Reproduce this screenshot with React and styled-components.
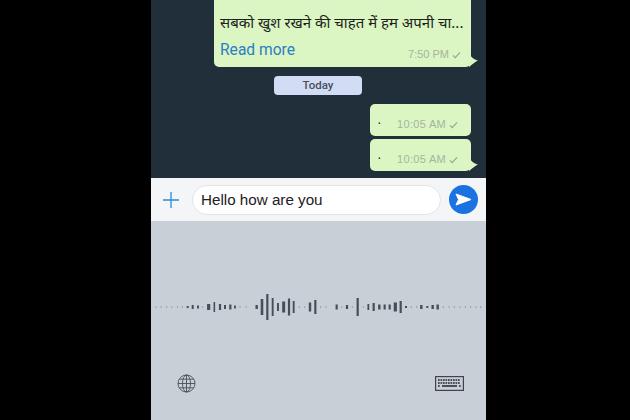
import styled, { createGlobalStyle } from "styled-components";

const GlobalStyle = createGlobalStyle`
  html, body {
    margin: 0;
    height: 420px;
    overflow: hidden;
    background: #000;
    font-family: "Liberation Sans", Arial, sans-serif;
  }
`;

const WAVE = [
  [18, 1, 1], [33, 1, 1], [50, 1, 1], [65, 1, 1], [82, 1, 1], [97, 1, 1],
  [113, 2, 2], [128, 4, 2], [144, 3, 2], [158, 1, 1], [176, 6, 3.2], [193, 10, 1.6],
  [210, 6, 2.2], [225, 4, 2], [241, 5, 2.2], [255, 3, 1.8], [270, 1, 1], [288, 1, 1],
  [320, 4, 2.4], [336, 16, 2.6], [352, 26, 2.2], [368, 18, 1.9], [384, 8, 1.9], [401, 11, 3],
  [417, 17, 2.2], [431, 12, 1.9], [448, 1, 1], [464, 1, 1], [480, 9, 2.4], [496, 14, 2.2],
  [512, 1, 1], [528, 1, 1], [560, 5, 2.2], [575, 1, 1], [591, 4, 2.2], [607, 1, 1],
  [623, 18, 2.2], [640, 1, 1], [655, 6, 1.8], [671, 8, 2.2], [688, 5, 2.4], [704, 5, 2.2],
  [719, 5, 2.2], [736, 9, 3.2], [752, 12, 2.2], [768, 2, 2], [784, 1, 1], [800, 1, 1],
  [814, 4, 2.4], [832, 2, 2], [848, 4, 2.4], [863, 5, 2.4], [880, 1, 1], [897, 1, 1],
  [913, 1, 1], [930, 1, 1], [946, 1, 1], [962, 1, 1], [978, 1, 1], [992, 1, 1],
];

function Tail() {
  return (
    <TailShape viewBox="0 0 10 14">
      <path d="M0 0 C1.500 3 4 6.500 9 7.500 C6.500 8.500 4 11 0 14 Z" fill="#dbf5c3" />
    </TailShape>
  );
}

function Check() {
  return (
    <svg width="9" height="8" viewBox="0 0 10 9">
      <path d="M1 5 L3.500 7.500 L9 1.500" fill="none" stroke="#97a58e" strokeWidth="1.200" />
    </svg>
  );
}

function ShortBubble({ time, tail }) {
  return (
    <Short>
      <Dot>·</Dot>
      <ShortMeta>
        {time} <Check />
      </ShortMeta>
      {tail && <Tail />}
    </Short>
  );
}

function Waveform() {
  return (
    <svg width="335" height="30" viewBox="0 0 335 30">
      {WAVE.map(([x, h, w]) => (
        <rect key={x} x={x / 3 - 1 - w / 2} y={15 - h / 2} width={w} height={h} fill={h > 1 ? "#474e57" : "#6d747c"} />
      ))}
    </svg>
  );
}

function Globe() {
  return (
    <svg width="19" height="19" viewBox="0 0 19 19" fill="none" stroke="#4a4f57" strokeWidth="0.900">
      <circle cx="9.500" cy="9.500" r="8.500" />
      <ellipse cx="9.500" cy="9.500" rx="4" ry="8.500" />
      <path d="M9.500 1 V18 M1 9.500 H18 M2.300 5.200 H16.700 M2.300 13.800 H16.700" />
    </svg>
  );
}

function KeyboardIcon() {
  const rows = [
    [4, 6.500, 9, 11.500, 14, 16.500, 19, 21.500, 24],
    [4, 6.500, 9, 11.500, 14, 16.500, 19, 21.500, 24],
  ];
  return (
    <svg width="29" height="15" viewBox="0 0 29 15">
      <rect x="0.600" y="0.600" width="27.800" height="13.800" fill="none" stroke="#3f444c" strokeWidth="1.200" />
      {rows.map((row, r) =>
        row.map((x) => <rect key={`${r}-${x}`} x={x - 1} y={3 + r * 3} width="1.700" height="2" fill="#4a4f57" />)
      )}
      <rect x="3" y="9" width="1.700" height="2" fill="#4a4f57" />
      <rect x="7" y="9" width="15" height="2" fill="#4a4f57" />
      <rect x="24" y="9" width="1.700" height="2" fill="#4a4f57" />
    </svg>
  );
}

export default function App() {
  return (
    <>
      <GlobalStyle />
      <Phone>
        <Chat>
          <LongBubble>
            <Hindi>सबको खुश रखने की चाहत में हम अपनी चा...</Hindi>
            <Footer>
              <ReadMore>Read more</ReadMore>
              <Meta>
                7:50 PM <Check />
              </Meta>
            </Footer>
            <Tail />
          </LongBubble>
          <DayPill>Today</DayPill>
          <ShortBubble time="10:05 AM" />
          <ShortBubble time="10:05 AM" tail />
        </Chat>
        <InputBar>
          <svg width="18" height="18" viewBox="0 0 18 18">
            <path d="M9 1 V17 M1 9 H17" stroke="#2f88d8" strokeWidth="1.300" />
          </svg>
          <TextBox>Hello how are you</TextBox>
          <SendButton>
            <svg width="17" height="13" viewBox="0 0 17 13">
              <path d="M1 1 L16 6.500 L1 12 L3.500 6.500 Z" fill="#fff" stroke="#fff" strokeLinejoin="round" />
            </svg>
          </SendButton>
        </InputBar>
        <Dictation>
          <Waveform />
          <KeyRow>
            <Globe />
            <KeyboardIcon />
          </KeyRow>
        </Dictation>
      </Phone>
    </>
  );
}

const Phone = styled.div`
  width: 335px;
  height: 420px;
  margin-left: 151px;
  display: flex;
  flex-direction: column;
  overflow: hidden;
`;

const Chat = styled.div`
  height: 178px;
  flex: none;
  box-sizing: border-box;
  padding: 0 15px 7px 0;
  background: #202f3a;
  display: flex;
  flex-direction: column;
  align-items: flex-end;
  justify-content: flex-end;
`;

const LongBubble = styled.div`
  position: relative;
  flex: none;
  width: 257px;
  height: 67px;
  margin-bottom: 9px;
  box-sizing: border-box;
  padding: 10px 6px 0;
  background: #dbf5c3;
  border-radius: 0 0 5px 5px;
`;

const Hindi = styled.div`
  font-family: "Noto Sans", "Noto Sans Devanagari", "Liberation Sans", sans-serif;
  font-size: 15px;
  line-height: 24px;
  color: #1c1f1c;
  white-space: nowrap;
`;

const Footer = styled.div`
  display: flex;
  justify-content: space-between;
  align-items: flex-end;
  margin-top: 6px;
  padding: 0 4px 0 0;
`;

const ReadMore = styled.span`
  font-family: Roboto, "Liberation Sans", sans-serif;
  font-size: 15.600px;
  line-height: 20px;
  color: #2a80c2;
`;

const Meta = styled.span`
  display: inline-flex;
  align-items: center;
  gap: 3px;
  font-size: 11px;
  line-height: 13px;
  color: #a7b49f;
  white-space: nowrap;
  margin-bottom: -1px;
`;

const ShortMeta = styled(Meta)`
  letter-spacing: 0.300px;
  margin: 9px 0 0;
`;

const TailShape = styled.svg`
  position: absolute;
  right: -8px;
  bottom: 0;
  width: 10px;
  height: 14px;
`;

const DayPill = styled.div`
  align-self: flex-start;
  flex: none;
  width: 88px;
  height: 19px;
  margin: 0 0 6px 123px;
  border-radius: 4px;
  background: #d3dcf5;
  color: #47505c;
  font-family: Roboto, "Liberation Sans", sans-serif;
  font-size: 11.500px;
  font-weight: 500;
  line-height: 19px;
  text-align: center;
`;

const Short = styled.div`
  position: relative;
  flex: none;
  width: 101px;
  height: 32px;
  margin-top: 3px;
  box-sizing: border-box;
  padding: 0 13px 0 7px;
  background: #dbf5c3;
  border-radius: 5px;
  display: flex;
  justify-content: space-between;
  align-items: center;
`;

const Dot = styled.span`
  font-size: 14px;
  line-height: 14px;
  margin-top: 4px;
  color: #333;
`;

const InputBar = styled.div`
  height: 43px;
  flex: none;
  box-sizing: border-box;
  padding: 0 8px 0 11px;
  background: #f4f5f6;
  display: flex;
  align-items: center;
`;

const TextBox = styled.div`
  width: 249px;
  height: 30px;
  margin-left: 12px;
  box-sizing: border-box;
  padding-left: 8px;
  background: #fff;
  border: 1px solid #e2e4e6;
  border-radius: 15px;
  color: #1e2024;
  font-size: 15.200px;
  line-height: 28px;
`;

const SendButton = styled.div`
  width: 29px;
  height: 29px;
  margin-left: 8px;
  border-radius: 50%;
  background: #1a73e0;
  display: flex;
  align-items: center;
  justify-content: center;
`;

const Dictation = styled.div`
  flex: 1;
  box-sizing: border-box;
  padding-top: 71px;
  background: #c9cfd7;
  display: flex;
  flex-direction: column;
`;

const KeyRow = styled.div`
  display: flex;
  justify-content: space-between;
  align-items: center;
  margin-top: 52px;
  padding: 0 22px 0 26px;
`;
